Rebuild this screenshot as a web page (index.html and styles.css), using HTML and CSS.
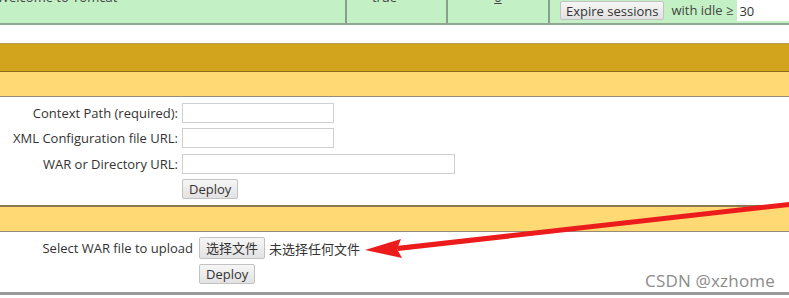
FILE: index.html
```html
<!DOCTYPE html>
<html lang="en">
<head>
  <meta charset="UTF-8" />
  <title>Tomcat Web Application Manager</title>
  <link rel="stylesheet" href="styles.css">
</head>
<body>
  <div id="page">
    <div class="app-row">
      <div class="cell cell-path"><span class="cut-text">Welcome to Tomcat</span></div>
      <div class="cell cell-running"><span class="cut-text">true</span></div>
      <div class="cell cell-sessions"><span class="cut-text link">0</span></div>
      <div class="cell cell-commands">
        <button class="btn">Expire sessions</button>
        <span class="idle">with idle &ge;</span>
        <input class="idle-input" type="text" value="30">
      </div>
    </div>

    <div class="spacer"></div>

    <div class="title-bar"></div>
    <div class="sub-bar"></div>

    <div class="deploy-form">
      <div class="form-row">
        <label class="form-label">Context Path (required):</label>
        <input class="field short" type="text">
      </div>
      <div class="form-row">
        <label class="form-label">XML Configuration file URL:</label>
        <input class="field short" type="text">
      </div>
      <div class="form-row">
        <label class="form-label">WAR or Directory URL:</label>
        <input class="field long" type="text">
      </div>
      <div class="form-row">
        <span class="form-label"></span>
        <button class="btn">Deploy</button>
      </div>
    </div>

    <div class="sub-bar second"></div>

    <div class="upload-form">
      <div class="form-row">
        <label class="upload-label">Select WAR file to upload</label>
        <span class="file-btn">选择文件</span>
        <span class="file-none">未选择任何文件</span>
      </div>
      <div class="form-row">
        <span class="upload-label"></span>
        <button class="btn">Deploy</button>
      </div>
    </div>

    <div class="bottom-line"></div>

    <svg class="arrow" width="789" height="298" viewBox="0 0 789 298">
      <polygon points="789,202 789,207 398,251 396,246" fill="#ec1c1c"/>
      <polygon points="365,250 401,239 397,249 402,258" fill="#ec1c1c"/>
    </svg>
    <div class="watermark">CSDN @xzhome</div>
  </div>
</body>
</html>
```

FILE: styles.css
```css
* {
  margin: 0;
  padding: 0;
  box-sizing: border-box;
}
html, body {
  width: 100%;
  height: 100%;
  overflow: hidden;
  background: #fff;
  font-family: "Open Sans", "Noto Sans CJK SC", sans-serif;
  font-size: 13px;
  color: #333;
}
#page {
  position: relative;
  width: 789px;
  height: 298px;
}

/* applications table row, cut off at the top */
.app-row {
  display: grid;
  grid-template-columns: 347px 101px 102px 1fr;
  height: 25px;
  background: #c3f1c5;
  border-bottom: 2px solid #8fa690;
}
.cell {
  border-right: 2px solid #8a9f8b;
  overflow: hidden;
}
.cell-commands {
  border-right: none;
  display: flex;
  align-items: flex-start;
  padding-left: 10px;
  padding-top: 1px;
  gap: 7px;
  white-space: nowrap;
}
.cut-text {
  display: block;
  margin-top: -11px;
  line-height: 16px;
  color: #444;
}
.cell-path .cut-text {
  margin-left: -3px;
}
.cell-running .cut-text {
  text-align: center;
  padding-right: 24px;
}
.cell-sessions .cut-text {
  text-align: center;
  text-decoration: underline;
}
.cell-commands .btn {
  flex-shrink: 0;
  height: 19px;
  line-height: 16px;
  padding: 0 5px;
}
.idle {
  flex-shrink: 0;
  line-height: 19px;
  color: #444;
}
.idle-input {
  flex: 1;
  min-width: 0;
  margin-top: -1px;
  margin-left: -3px;
  height: 21px;
  border: none;
  background: #fff;
  padding-left: 2px;
  font-family: "Open Sans", sans-serif;
  font-size: 13px;
  color: #333;
}

.spacer {
  height: 18px;
}

.title-bar {
  height: 29px;
  background: #d2a41e;
  border-top: 1px solid #b39a55;
  border-bottom: 1px solid #8b6c1c;
}
.sub-bar {
  height: 25px;
  background: #fed974;
  border-bottom: 1px solid #968a78;
}
.sub-bar.second {
  height: 27px;
  border-top: 2px solid #8c7a52;
}

.btn {
  height: 20px;
  padding: 0 6px;
  border: 1px solid #c2c2c2;
  border-radius: 2px;
  background: linear-gradient(#f6f6f6, #e2e2e2);
  font-family: "Open Sans", sans-serif;
  font-size: 13px;
  color: #333;
}

.form-row {
  display: flex;
  align-items: center;
  height: 25.5px;
}
.deploy-form {
  padding-top: 3px;
  padding-bottom: 3px;
}
.form-label {
  width: 182px;
  text-align: right;
  padding-right: 4px;
  flex-shrink: 0;
}
.field {
  height: 20px;
  border: 1px solid #cfcfcf;
  background: #fff;
}
.field.short {
  width: 152px;
}
.field.long {
  width: 273px;
}

.upload-form {
  padding-top: 3px;
}
.upload-form .form-row:first-child {
  height: 26px;
}
.upload-label {
  width: 199px;
  text-align: right;
  padding-right: 6px;
  flex-shrink: 0;
}
.file-btn {
  display: inline-block;
  height: 22px;
  line-height: 20px;
  padding: 0 6px;
  border: 1px solid #c2c2c2;
  border-radius: 2px;
  background: linear-gradient(#f6f6f6, #e2e2e2);
}
.file-none {
  margin-left: 4px;
}

.bottom-line {
  margin-top: 5px;
  height: 3px;
  background: #9a9a9a;
}

.arrow {
  position: absolute;
  left: 0;
  top: 0;
  pointer-events: none;
}
.watermark {
  position: absolute;
  right: 14px;
  top: 269px;
  font-family: "Open Sans", sans-serif;
  font-size: 17px;
  color: #8c8c8c;
  letter-spacing: 0.2px;
}
```
